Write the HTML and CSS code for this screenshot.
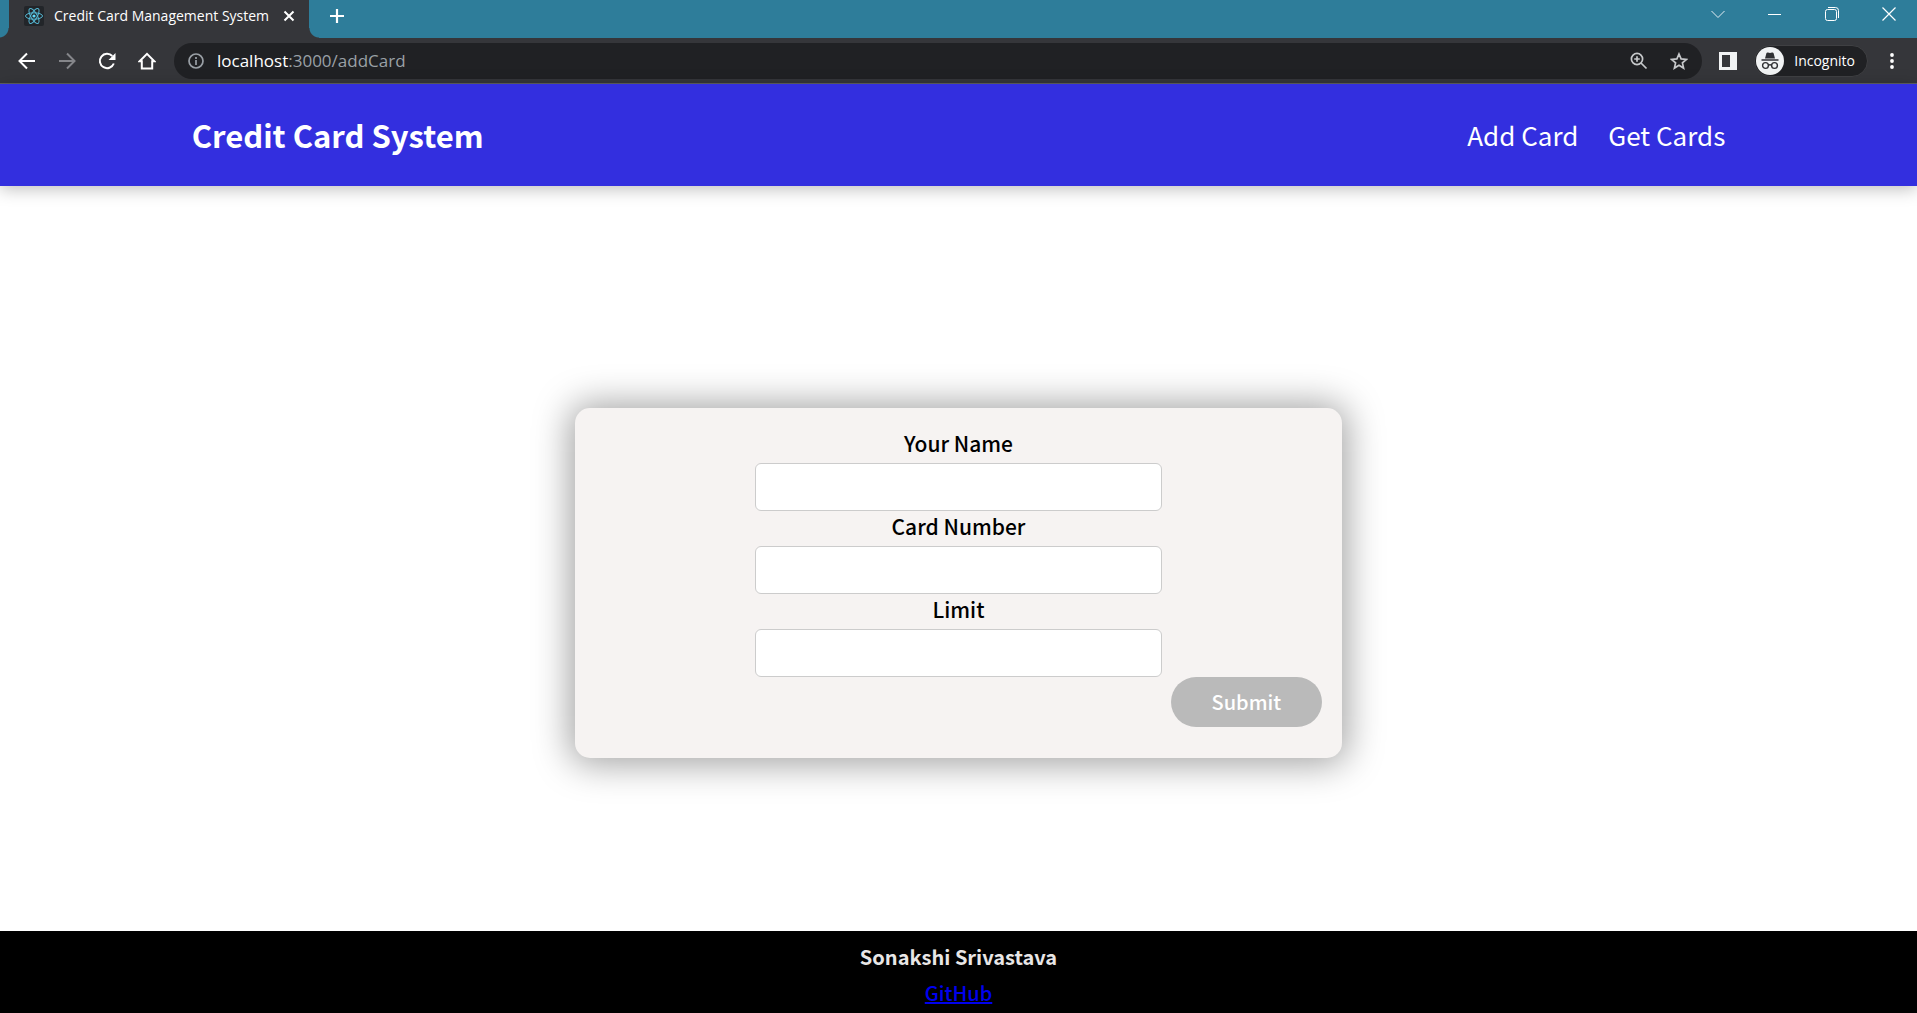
FILE: index.html
```html
<!DOCTYPE html>
<html lang="en">
<head>
<meta charset="utf-8">
<meta name="viewport" content="width=device-width, initial-scale=1">
<title>Credit Card Management System</title>
<link rel="stylesheet" href="styles.css">
</head>
<body>
<div class="browser">
  <div class="tab-strip">
    <div class="tab">
      <svg class="favicon" viewBox="0 0 20 20" aria-hidden="true">
        <rect width="20" height="20" rx="2" fill="#222529"/>
        <g fill="none" stroke="#55b8d4" stroke-width="1">
          <ellipse cx="10" cy="10" rx="8.5" ry="3.2"/>
          <ellipse cx="10" cy="10" rx="8.5" ry="3.2" transform="rotate(60 10 10)"/>
          <ellipse cx="10" cy="10" rx="8.5" ry="3.2" transform="rotate(120 10 10)"/>
        </g>
        <circle cx="10" cy="10" r="1.6" fill="#61dafb"/>
      </svg>
      <span class="tab-title">Credit Card Management System</span>
      <button class="icon-button tab-close" type="button" aria-label="Close tab">
        <svg width="12" height="12" viewBox="0 0 12 12"><path d="M1.5 1.5l9 9M10.5 1.5l-9 9" stroke="#fff" stroke-width="2"/></svg>
      </button>
    </div>
    <button class="icon-button new-tab" type="button" aria-label="New tab">
      <svg width="16" height="16" viewBox="0 0 16 16"><path d="M8 1v14M1 8h14" stroke="#fff" stroke-width="2.2"/></svg>
    </button>
    <div class="window-controls">
      <button class="icon-button" type="button" aria-label="Search tabs">
        <svg width="14" height="14" viewBox="0 0 14 14"><path d="M.5 4L7 10.500L13.500 4" fill="none" stroke="#e3eef2"/></svg>
      </button>
      <button class="icon-button" type="button" aria-label="Minimize">
        <svg width="14" height="14" viewBox="0 0 14 14"><path d="M0 7.500h13" stroke="#fff"/></svg>
      </button>
      <button class="icon-button" type="button" aria-label="Restore">
        <svg width="14" height="14" viewBox="0 0 14 14"><g fill="none" stroke="#fff"><rect x=".5" y="2.500" width="11" height="11" rx="2"/><path d="M3 .5h7.500a3 3 0 0 1 3 3V11"/></g></svg>
      </button>
      <button class="icon-button" type="button" aria-label="Close">
        <svg width="14" height="14" viewBox="0 0 14 14"><path d="M.5 .5l13 13M13.500 .5l-13 13" stroke="#fff" stroke-width="1.200"/></svg>
      </button>
    </div>
  </div>
  <div class="toolbar">
    <div class="nav-buttons">
      <button class="icon-button" type="button" aria-label="Back">
        <svg width="18" height="18" viewBox="0 0 18 18"><path d="M17 9H2M9 1.500L1.500 9L9 16.500" fill="none" stroke="#fff" stroke-width="2"/></svg>
      </button>
      <button class="icon-button" type="button" aria-label="Forward">
        <svg width="18" height="18" viewBox="0 0 18 18"><path d="M1 9h15M9 1.500L16.500 9L9 16.500" fill="none" stroke="#85868a" stroke-width="2"/></svg>
      </button>
      <button class="icon-button" type="button" aria-label="Reload">
        <svg width="18" height="18" viewBox="0 0 18 18"><path d="M15.800 11.500A7.200 7.200 0 1 1 14.300 4" fill="none" stroke="#fff" stroke-width="2"/><path d="M17.500 1v7h-7z" fill="#fff"/></svg>
      </button>
      <button class="icon-button" type="button" aria-label="Home">
        <svg width="18" height="18" viewBox="0 0 18 18"><path d="M1.600 9.200L9 1.800L16.400 9.200H14.200V16.500H3.800V9.200z" fill="none" stroke="#fff" stroke-width="2"/></svg>
      </button>
    </div>
    <div class="omnibox">
      <svg width="16" height="16" viewBox="0 0 16 16" aria-hidden="true"><circle cx="8" cy="8" r="7" fill="none" stroke="#9aa0a6" stroke-width="1.700"/><path d="M8 7v5M8 4v2" stroke="#9aa0a6" stroke-width="1.700"/></svg>
      <span class="url"><span class="host">localhost</span>:3000/addCard</span>
      <button class="icon-button" type="button" aria-label="Zoom">
        <svg width="18" height="18" viewBox="0 0 18 18"><g fill="none" stroke="#c6c8ca" stroke-width="1.700"><circle cx="7" cy="7" r="5.600"/><path d="M11 11l5.500 5.500M7 4.200v5.600M4.200 7h5.600"/></g></svg>
      </button>
      <button class="icon-button" type="button" aria-label="Bookmark">
        <svg width="18" height="18" viewBox="0 0 18 18"><path d="M9 2l2.100 4.900 5.300.5-4 3.500 1.200 5.200L9 13.300l-4.600 2.800 1.200-5.200-4-3.500 5.300-.5z" fill="none" stroke="#c6c8ca" stroke-width="1.700"/></svg>
      </button>
    </div>
    <button class="icon-button side-panel" type="button" aria-label="Side panel">
      <svg width="18" height="18" viewBox="0 0 18 18"><path fill="#f1f3f4" fill-rule="evenodd" d="M0 0h18v18H0zM3 3v12h8V3z"/></svg>
    </button>
    <button class="incognito" type="button">
      <svg width="28" height="28" viewBox="0 0 28 28" aria-hidden="true">
        <circle cx="14" cy="14" r="14" fill="#f1f3f4"/>
        <path d="M9 11.500l1.400-5.200c.2-.8.900-1 1.600-.8l2 .5 2-.5c.7-.2 1.400 0 1.600.8L19 11.500zM5.500 12.300h17v1.500h-17z" fill="#303134"/>
        <g fill="none" stroke="#303134" stroke-width="1.400"><circle cx="9.500" cy="18.500" r="2.900"/><circle cx="18.500" cy="18.500" r="2.900"/><path d="M12.400 18.200q1.600-.9 3.200 0"/></g>
      </svg>
      <span>Incognito</span>
    </button>
    <button class="icon-button menu" type="button" aria-label="Menu">
      <svg width="4" height="18" viewBox="0 0 4 18"><g fill="#fff"><circle cx="2" cy="3" r="1.900"/><circle cx="2" cy="9" r="1.900"/><circle cx="2" cy="15" r="1.900"/></g></svg>
    </button>
  </div>
</div>
<header class="site-header">
  <h1 class="brand">Credit Card System</h1>
  <nav class="site-nav">
    <a href="#add">Add Card</a>
    <a href="#cards">Get Cards</a>
  </nav>
</header>
<main class="content">
  <form class="card-form">
    <div class="fields">
      <label for="name">Your Name</label>
      <input id="name" type="text">
      <label for="number">Card Number</label>
      <input id="number" type="text">
      <label for="limit">Limit</label>
      <input id="limit" type="text">
    </div>
    <button class="submit" type="submit" disabled>Submit</button>
  </form>
</main>
<footer class="site-footer">
  <strong>Sonakshi Srivastava</strong>
  <a href="#github">GitHub</a>
</footer>
</body>
</html>
```
FILE: styles.css
```css
* {
  box-sizing: border-box;
}

body {
  margin: 0;
  min-height: 100vh;
  display: flex;
  flex-direction: column;
  background: #fff;
  color: #000;
  font-family: "Noto Sans CJK JP", "Noto Sans", sans-serif;
  font-size: 20px;
}

svg {
  display: block;
  flex: none;
}

/* Browser frame */
.browser {
  background: #35363a;
  border-bottom: 1px solid #5f6062;
  color: #fff;
  font-family: "Open Sans", "Noto Sans", sans-serif;
}

.icon-button {
  display: flex;
  align-items: center;
  justify-content: center;
  padding: 0;
  border: 0;
  background: none;
}

.tab-strip {
  display: flex;
  height: 38px;
  padding-left: 9px;
  background: #2e7d9a;
}

.tab {
  position: relative;
  display: flex;
  align-items: center;
  width: 300px;
  padding: 0 14px 6px 15px;
  background: #35363a;
}

.tab::before,
.tab::after {
  content: "";
  position: absolute;
  bottom: 0;
  width: 10px;
  height: 10px;
}

.tab::before {
  right: 100%;
  background: radial-gradient(circle at 0 0, transparent 9px, #35363a 10px);
}

.tab::after {
  left: 100%;
  background: radial-gradient(circle at 100% 0, transparent 9px, #35363a 10px);
}

.favicon {
  width: 20px;
  height: 20px;
}

.tab-title {
  flex: 1;
  margin-left: 10px;
  font-size: 14px;
  line-height: 20px;
  white-space: nowrap;
}

.new-tab {
  width: 55px;
  padding-bottom: 6px;
}

.window-controls {
  display: flex;
  margin-left: auto;
}

.window-controls .icon-button {
  width: 57px;
  height: 27px;
}

.toolbar {
  display: flex;
  align-items: center;
  height: 45px;
  padding: 0 9px 0 7px;
}

.nav-buttons {
  display: flex;
  width: 167px;
}

.nav-buttons .icon-button {
  width: 40px;
  height: 36px;
}

.omnibox {
  flex: 1;
  display: flex;
  align-items: center;
  height: 36px;
  padding: 0 14px;
  border-radius: 18px;
  background: #202124;
}

.omnibox .icon-button {
  margin-left: 22px;
}

.url {
  flex: 1;
  margin-left: 13px;
  color: #9aa0a6;
  font-size: 17px;
  line-height: 24px;
}

.host {
  color: #fff;
}

.side-panel {
  width: 52px;
}

.incognito {
  display: flex;
  align-items: center;
  gap: 10px;
  height: 32px;
  padding: 0 12px 0 1px;
  border: 1px solid #3f4043;
  border-radius: 16px;
  background: #202124;
  color: #fff;
  font-family: inherit;
  font-size: 14px;
}

.menu {
  width: 32px;
  margin-left: 8px;
}

/* Page */
.site-header {
  position: relative;
  display: flex;
  align-items: center;
  justify-content: space-between;
  height: 102px;
  padding: 0 10%;
  background: #332fdf;
  color: #fff;
  box-shadow: 0 3px 16px rgba(0, 0, 0, 0.26);
}

.brand {
  margin: 0;
  font-size: 31px;
  line-height: 48px;
  font-weight: 700;
}

.site-nav {
  display: flex;
  gap: 30px;
  font-size: 26px;
  line-height: 40px;
}

.site-nav a {
  color: #fff;
  text-decoration: none;
}

.content {
  flex: 1;
  display: flex;
  align-items: center;
  justify-content: center;
  padding: 48px 0 0;
}

.card-form {
  display: flex;
  flex-direction: column;
  width: 40%;
  padding: 20px 20px 31px;
  border-radius: 15px;
  background: #f6f3f2;
  box-shadow: 0 1px 36px 5px rgba(0, 0, 0, 0.37);
}

.fields {
  display: flex;
  flex-direction: column;
  width: 56%;
  margin: 0 auto;
}

.fields label {
  margin-bottom: 4px;
  font-size: 21px;
  line-height: 31px;
  font-weight: 500;
  text-align: center;
}

.fields input {
  height: 48px;
  padding: 0 8px;
  border: 1px solid #ccc;
  border-radius: 6px;
  background: #fff;
  font: inherit;
}

.submit {
  align-self: flex-end;
  width: 151px;
  height: 50px;
  border: 0;
  border-radius: 25px;
  background: #bababa;
  color: #fff;
  font: inherit;
  font-weight: 500;
}

.site-footer {
  display: flex;
  flex-direction: column;
  align-items: center;
  padding: 8px 0 2px;
  background: #000;
  color: #e8e6e6;
  line-height: 36px;
}

.site-footer a {
  color: #00e;
  font-weight: 500;
}
```
